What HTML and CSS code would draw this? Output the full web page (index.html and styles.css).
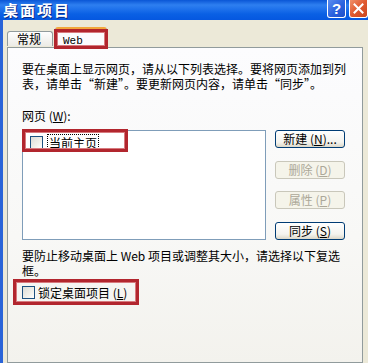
FILE: index.html
```html
<!DOCTYPE html>
<html lang="zh-CN">
<head>
<meta charset="utf-8">
<link rel="stylesheet" href="styles.css">
</head>
<body>
<div class="window">
  <div class="titlebar">
    <span class="title">桌面项目</span>
    <div class="ctrls">
      <span class="cbtn help">?</span>
      <span class="cbtn close"><svg width="11" height="11" viewBox="0 0 11 11"><path d="M1.5 1.5 L9.5 9.5 M9.5 1.5 L1.5 9.5" stroke="#fff" stroke-width="2" stroke-linecap="square"/></svg></span>
    </div>
  </div>
  <div class="client">
    <div class="tabs">
      <div class="tab">常规</div>
      <div class="tab active"><span class="mono">Web</span><span class="mark mark-tab"></span></div>
    </div>
    <div class="panel">
      <p class="desc">要在桌面上显示网页，请从以下列表选择。要将网页添加到列表，请单击“新建”。要更新网页内容，请单击“同步”。</p>
      <div class="label">网页 (<u>W</u>):</div>
      <div class="listrow">
        <div class="list">
          <div class="item">
            <span class="cb"></span><span class="itext">当前主页</span>
            <span class="mark mark-item"></span>
          </div>
        </div>
        <div class="btns">
          <div class="btn">新建 (<u>N</u>)...</div>
          <div class="btn disabled">删除 (<u>D</u>)</div>
          <div class="btn disabled">属性 (<u>P</u>)</div>
          <div class="btn">同步 (<u>S</u>)</div>
        </div>
      </div>
      <p class="desc desc2">要防止移动桌面上 Web 项目或调整其大小，请选择以下复选框。</p>
      <div class="lock">
        <span class="cb"></span><span class="ltext">锁定桌面项目 (<u>L</u>)</span>
        <span class="mark mark-lock"></span>
      </div>
    </div>
  </div>
</div>
</body>
</html>
```

FILE: styles.css
```css
html, body {
  margin: 0;
  padding: 0;
  background: #ece9d8;
}
.window {
  width: 368px;
  height: 363px;
  overflow: hidden;
  display: flex;
  flex-direction: column;
  font-family: "Noto Sans CJK SC", "Liberation Sans", sans-serif;
  font-size: 12px;
  color: #000;
}
.titlebar {
  height: 20px;
  flex: none;
  display: flex;
  justify-content: space-between;
  align-items: flex-start;
  background: linear-gradient(to bottom, #0a56d6 0%, #2e7ff0 25%, #1f72ec 45%, #0a60e4 70%, #0557e0 100%);
}
.title {
  color: #fff;
  font-weight: bold;
  font-size: 15px;
  line-height: 18px;
  margin-top: 1px;
  padding-left: 3px;
  letter-spacing: 2px;
  text-shadow: 1px 1px 0 #0b2d8a;
}
.ctrls {
  display: flex;
  gap: 3px;
}
.cbtn {
  width: 19px;
  height: 18px;
  box-sizing: border-box;
  border: 1px solid #fff;
  border-top: none;
  border-radius: 0 0 3px 3px;
  display: flex;
  align-items: center;
  justify-content: center;
  color: #fff;
  font-family: "Liberation Sans", sans-serif;
  font-weight: bold;
  font-size: 15px;
}
.help {
  background: linear-gradient(135deg, #5b8ef0 0%, #2a62df 55%, #1e4fc8 100%);
}
.close {
  background: linear-gradient(135deg, #f0906a 0%, #e0592f 50%, #c9461e 100%);
}
.client {
  flex: 1;
  border-left: 3px solid #2a64d8;
  padding: 7px 5px 0 4px;
  display: flex;
  flex-direction: column;
}
.tabs {
  display: flex;
  align-items: flex-end;
  height: 20px;
  position: relative;
  z-index: 1;
}
.tab {
  height: 15px;
  box-sizing: border-box;
  border: 1px solid #919b9c;
  border-bottom: none;
  border-radius: 3px 3px 0 0;
  background: linear-gradient(to bottom, #fefefe, #ecebe6);
  padding: 0 0 0 9px;
  width: 46px;
  line-height: 14px;
  margin-bottom: 1px;
}
.tab.active {
  position: relative;
  height: 21px;
  width: 52px;
  margin-left: 2px;
  margin-bottom: -1px;
  background: #fcfcfe;
  border-top: 2px solid #f2a73c;
  padding: 3px 0 0 7px;
  line-height: 14px;
}
.mono {
  font-family: "Liberation Mono", monospace;
  font-size: 11px;
}
.mark {
  position: absolute;
  border: 3px solid #b2262e;
  box-shadow: inset 0 0 0 1px #d77a7e;
  pointer-events: none;
}
.mark-tab {
  left: -2px;
  top: 0px;
  width: 54px;
  height: 20px;
  box-sizing: border-box;
}
.panel {
  flex: 1;
  border: 1px solid #919b9c;
  background: linear-gradient(to bottom, #fcfcfe 0%, #f8f8f6 60%, #f3f2ed 100%);
  padding: 13px 14px 0 14px;
  display: flex;
  flex-direction: column;
}
.desc {
  margin: 0;
  width: 326px;
  line-height: 15px;
}
.label {
  margin-top: 17px;
  line-height: 15px;
}
.listrow {
  margin-top: 7px;
  display: flex;
  gap: 9px;
}
.list {
  width: 244px;
  height: 110px;
  box-sizing: border-box;
  border: 1px solid #7f9db9;
  background: #fff;
}
.item {
  position: relative;
  display: flex;
  align-items: center;
  height: 21px;
  padding-left: 7px;
  margin-top: 1px;
}
.cb {
  width: 13px;
  height: 13px;
  box-sizing: border-box;
  border: 1px solid #1c5180;
  background: linear-gradient(135deg, #dcdcd7 0%, #f0f0ea 60%, #ffffff 100%);
  flex: none;
}
.itext {
  margin-left: 5px;
  outline: 1px dotted #000;
  padding: 0 1px;
  line-height: 15px;
}
.mark-item {
  left: -1px;
  top: -3px;
  width: 106px;
  height: 23px;
  box-sizing: border-box;
}
.btns {
  width: 70px;
  display: flex;
  flex-direction: column;
  justify-content: space-between;
}
.btn {
  height: 18px;
  box-sizing: border-box;
  border: 1px solid #003c74;
  border-radius: 3px;
  background: linear-gradient(to bottom, #ffffff 0%, #f4f3ee 70%, #dcd8c8 100%);
  display: flex;
  align-items: center;
  justify-content: center;
  line-height: 14px;
  white-space: nowrap;
}
.btn.disabled {
  border-color: #c9c7ba;
  background: #f5f4ea;
  color: #aca899;
}
.desc2 {
  margin-top: 8px;
}
.lock {
  position: relative;
  margin-top: 7px;
  display: flex;
  align-items: center;
  height: 15px;
}
.ltext {
  margin-left: 3px;
  line-height: 15px;
}
.mark-lock {
  left: -9px;
  top: -6px;
  width: 126px;
  height: 26px;
  box-sizing: border-box;
}
```
